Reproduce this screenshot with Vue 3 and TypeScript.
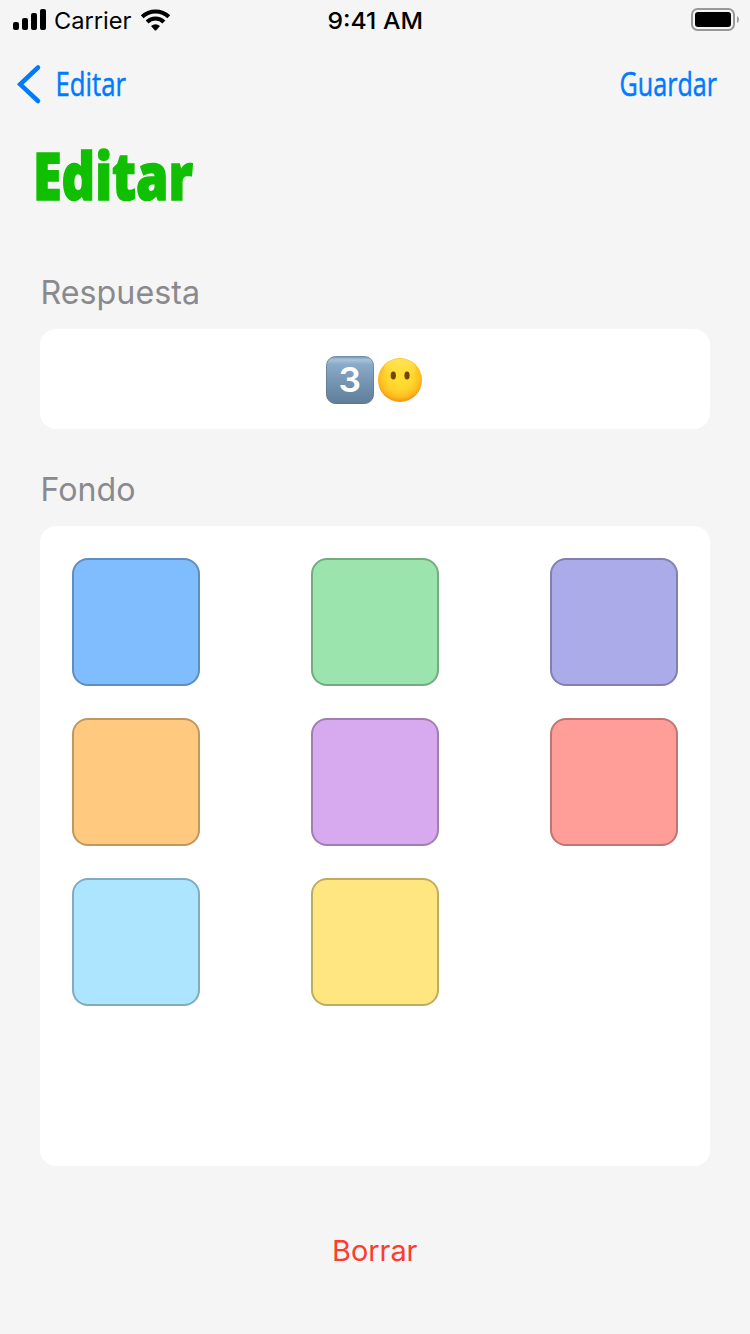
<script setup lang="ts">
interface Swatch {
  name: string
  color: string
}

const swatches: Swatch[] = [
  { name: 'azul', color: '#80bdff' },
  { name: 'verde', color: '#9be4ad' },
  { name: 'indigo', color: '#acabea' },
  { name: 'naranja', color: '#ffca80' },
  { name: 'morado', color: '#d7a9ee' },
  { name: 'rojo', color: '#ff9d98' },
  { name: 'celeste', color: '#ade4ff' },
  { name: 'amarillo', color: '#ffe680' },
]
</script>

<template>
  <main class="screen">
    <header class="status">
      <svg width="180" height="40" viewBox="0 0 180 40">
        <rect x="13" y="22" width="6" height="8" rx="2" />
        <rect x="22" y="18" width="6" height="12" rx="2" />
        <rect x="31" y="13" width="6" height="17" rx="2" />
        <rect x="40" y="9" width="6" height="21" rx="2" />
        <text x="54" y="29" textLength="77.5" lengthAdjust="spacingAndGlyphs" class="carrier">Carrier</text>
        <g fill="none" stroke="#000" stroke-width="4">
          <path d="M142.2 16.8 A19.2 19.2 0 0 1 168.8 16.8" />
          <path d="M147.1 22 A12 12 0 0 1 163.9 22" />
        </g>
        <path d="M151 26 Q155.500 22.400 160 26 L156.300 30.200 Q155.500 31 154.700 30.200 Z" />
      </svg>
      <svg width="110" height="40" viewBox="0 0 110 40">
        <text x="7.500" y="29" textLength="95.500" lengthAdjust="spacingAndGlyphs" class="clock">9:41 AM</text>
      </svg>
      <svg width="180" height="40" viewBox="0 0 180 40">
        <rect x="122" y="9" width="42" height="21" rx="5.500" fill="none" stroke="#999" stroke-width="2" />
        <rect x="125" y="12" width="36" height="15" rx="3" />
        <path d="M167 16 Q169 17 169 19.500 Q169 22 167 23 Z" fill="#999" />
      </svg>
    </header>

    <nav class="nav">
      <svg width="150" height="88" viewBox="0 0 150 88">
        <path d="M38 27.500 L20.200 44.300 L38 61" class="chevron" />
        <text x="55.500" y="56" textLength="70.500" lengthAdjust="spacingAndGlyphs" class="action">Editar</text>
      </svg>
      <svg width="150" height="88" viewBox="0 0 150 88">
        <text x="19.500" y="56" textLength="97.500" lengthAdjust="spacingAndGlyphs" class="action">Guardar</text>
      </svg>
    </nav>

    <h1 class="title">
      <svg width="220" height="100" viewBox="0 0 220 100">
        <text x="33" y="71.500" textLength="160" lengthAdjust="spacingAndGlyphs" class="heading">Editar</text>
      </svg>
    </h1>

    <section class="section answer">
      <svg width="200" height="60" viewBox="0 0 200 60">
        <text x="0.500" y="35" textLength="159.500" lengthAdjust="spacingAndGlyphs" class="caption">Respuesta</text>
      </svg>
      <div class="card answer-card">
        <svg width="100" height="58" viewBox="0 -1 100 58">
          <defs>
            <linearGradient id="key" x1="0" y1="0" x2="0" y2="1">
              <stop offset="0" stop-color="#7894ae" />
              <stop offset=".07" stop-color="#a9c3db" />
              <stop offset=".16" stop-color="#8bacc9" />
              <stop offset=".5" stop-color="#7797b4" />
              <stop offset="1" stop-color="#607e99" />
            </linearGradient>
            <linearGradient id="keyRim" x1="0" y1="0" x2="0" y2="1">
              <stop offset="0" stop-color="#718da7" />
              <stop offset="1" stop-color="#5a768f" />
            </linearGradient>
            <radialGradient id="face" cx=".5" cy=".42" r=".6">
              <stop offset="0" stop-color="#ffdf32" />
              <stop offset=".5" stop-color="#ffd62d" />
              <stop offset=".78" stop-color="#fdbd20" />
              <stop offset="1" stop-color="#ee8b0a" />
            </radialGradient>
            <linearGradient id="shine" x1="0" y1="0" x2="0" y2="1">
              <stop offset="0" stop-color="#ffee70" stop-opacity=".75" />
              <stop offset="1" stop-color="#ffe13d" stop-opacity="0" />
            </linearGradient>
          </defs>
          <g transform="translate(0 1)">
            <rect x="1.500" y="4.500" width="47" height="47" rx="9" fill="url(#key)" stroke="url(#keyRim)" stroke-width="1" />
            <text x="13.500" y="39.500" textLength="22.500" lengthAdjust="spacingAndGlyphs" class="digit">3</text>
            <circle cx="75" cy="28" r="22" fill="url(#face)" />
            <ellipse cx="75" cy="17" rx="16" ry="10" fill="url(#shine)" />
            <ellipse cx="68.300" cy="23.500" rx="2.600" ry="3.900" fill="#70440b" />
            <ellipse cx="82" cy="23.500" rx="2.600" ry="3.900" fill="#70440b" />
          </g>
        </svg>
      </div>
    </section>

    <section class="section">
      <svg width="200" height="60" viewBox="0 0 200 60">
        <text x="0.500" y="35" textLength="95" lengthAdjust="spacingAndGlyphs" class="caption">Fondo</text>
      </svg>
      <div class="card palette">
        <button
          v-for="swatch in swatches"
          :key="swatch.name"
          class="swatch"
          type="button"
          :style="{ backgroundColor: swatch.color }"
        ></button>
      </div>
    </section>

    <footer class="footer">
      <svg width="120" height="60" viewBox="0 0 120 60">
        <text x="17" y="40" textLength="85.500" lengthAdjust="spacingAndGlyphs" class="delete">Borrar</text>
      </svg>
    </footer>
  </main>
</template>

<style>
body {
  background: #f5f5f5;
}
</style>

<style scoped>
.screen {
  box-sizing: border-box;
  width: 750px;
  height: 1334px;
  background: #f5f5f5;
  font-family: Inter, "Liberation Sans", sans-serif;
}

svg {
  display: block;
  overflow: visible;
}

.status,
.nav {
  display: flex;
  justify-content: space-between;
}

.status {
  height: 40px;
}

.nav {
  height: 88px;
}

.carrier {
  font-size: 23.5px;
}

.clock {
  font-size: 23.5px;
  font-weight: 500;
}

.chevron {
  fill: none;
  stroke: #007aff;
  stroke-width: 4.5;
  stroke-linecap: round;
  stroke-linejoin: miter;
}

.action {
  fill: #007aff;
  stroke: #007aff;
  stroke-width: 0.5px;
  font-family: "Open Sans", "Noto Sans", sans-serif;
  font-size: 33.5px;
  font-weight: 500;
}

.title {
  height: 100px;
  margin: 0;
}

.heading {
  fill: #10c000;
  stroke: #10c000;
  stroke-width: 1.6px;
  font-family: "Open Sans", "Noto Sans", sans-serif;
  font-size: 65.5px;
  font-weight: 800;
}

.section {
  padding: 0 40px 37px;
}

.answer {
  margin-top: 41px;
}

.caption {
  fill: #8a8a8e;
  font-size: 33px;
}

.card {
  box-sizing: border-box;
  border-radius: 16px;
  background: #fff;
}

.answer-card {
  display: flex;
  align-items: center;
  justify-content: center;
  height: 100px;
}

.digit {
  fill: #fff;
  font-size: 34px;
  font-weight: 600;
}

.palette {
  display: grid;
  grid-template-columns: repeat(3, 128px);
  grid-auto-rows: 128px;
  justify-content: space-between;
  align-content: start;
  row-gap: 32px;
  height: 640px;
  padding: 32px;
}

.swatch {
  box-sizing: border-box;
  width: 128px;
  height: 128px;
  padding: 0;
  border: 2px solid rgba(0, 0, 0, 0.25);
  border-radius: 16px;
}

.footer {
  display: flex;
  justify-content: center;
  padding-top: 18px;
}

.delete {
  fill: #ff3b30;
  font-size: 29px;
}
</style>
